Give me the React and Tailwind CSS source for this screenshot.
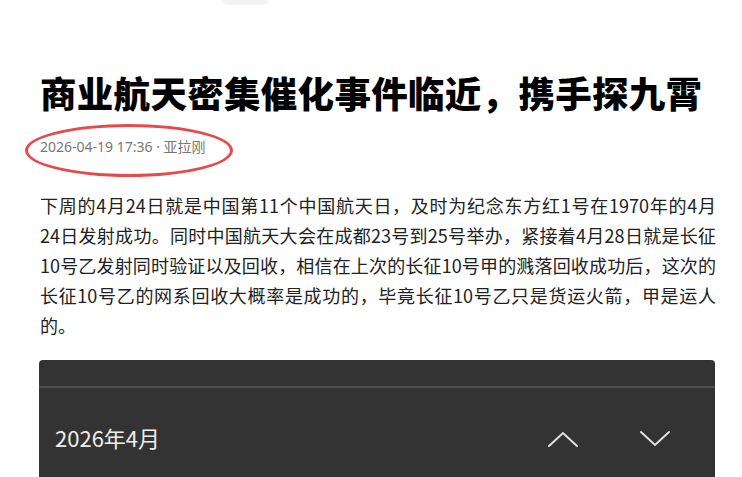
import React from 'react';

const Chevron = ({ up }) => (
  <svg width="32" height="18" viewBox="0 0 32 18" fill="none" stroke="#e2e2e2" strokeWidth="2" strokeLinecap="round">
    {up ? <polyline points="2,16 16,3 30,16" /> : <polyline points="2,2 16,15 30,2" />}
  </svg>
);

const lines = [
  '下周的4月24日就是中国第11个中国航天日，及时为纪念东方红1号在1970年的4月',
  '24日发射成功。同时中国航天大会在成都23号到25号举办，紧接着4月28日就是长征',
  '10号乙发射同时验证以及回收，相信在上次的长征10号甲的溅落回收成功后，这次的',
  '长征10号乙的网系回收大概率是成功的，毕竟长征10号乙只是货运火箭，甲是运人',
];

export default function App() {
  const cjk = { fontFamily: '"Noto Sans CJK SC", "Noto Sans", sans-serif' };

  return (
    <div className="min-h-screen bg-white overflow-hidden" style={cjk}>
      <div className="ml-[222px] w-[46px] h-[5px] bg-[#f3f3f3] rounded-b-md" />

      <div className="px-[40px]">
        <h1 className="mt-[66px] text-[36.5px] leading-[44px] font-black text-black whitespace-nowrap tracking-[0.3px]">
          商业航天密集催化事件临近，携手探九霄
        </h1>

        <div className="relative mt-[22px]">
          <div
            className="text-[14px] leading-[20px] text-[#777777]"
            style={{ fontFamily: '"Noto Sans", "Noto Sans CJK SC", sans-serif' }}
          >
            2026-04-19 17:36 · 亚拉刚
          </div>
          <div className="absolute left-[-15px] top-[-13px] w-[208px] h-[53px] rounded-[50%] border-[3px] border-[#e8494b]" />
        </div>

        <div className="mt-[33px] w-[676px] text-[18px] leading-[30px] text-[#222]">
          {lines.map((l) => (
            <div key={l} className="text-justify whitespace-nowrap [text-align-last:justify]">
              {l}
            </div>
          ))}
          <div>的。</div>
        </div>
      </div>

      <div className="ml-[39px] mt-[20px] w-[676px] h-[140px] bg-[#333333] rounded-t-[4px]">
        <div className="h-[26px]" />
        <div className="h-[2px] bg-[#4e4e4e]" />
        <div className="flex items-center justify-between pl-[16px] pr-[44px] pt-[34px]">
          <span className="text-[22px] leading-[30px] text-[#eeeeee]">2026年4月</span>
          <div className="flex items-center gap-[60px] pt-[4px]">
            <Chevron up />
            <Chevron />
          </div>
        </div>
      </div>
    </div>
  );
}
